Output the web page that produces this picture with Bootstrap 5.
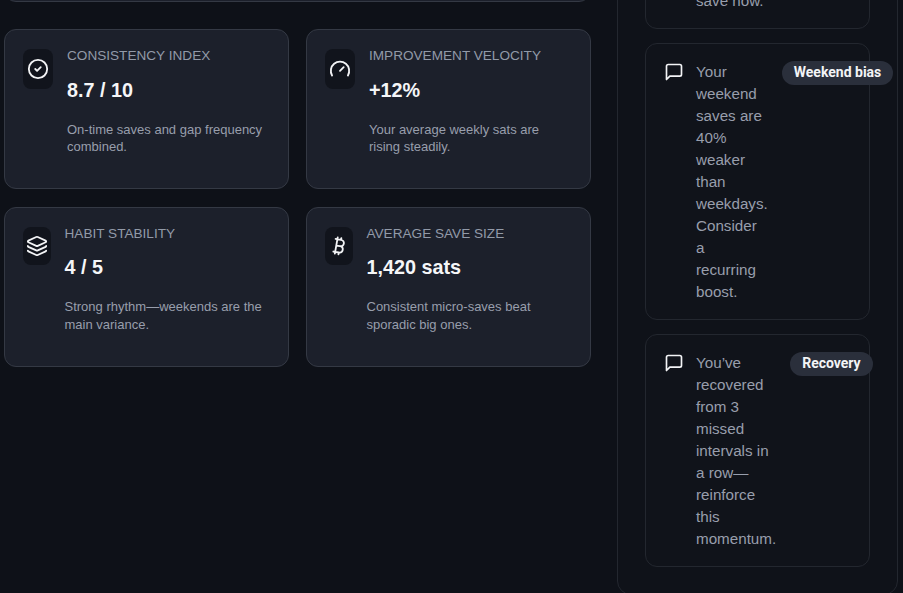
<!DOCTYPE html>
<html lang="en">
<head>
    <meta charset="UTF-8">
    <meta name="viewport" content="width=device-width, initial-scale=1.0">
    <title>Savings insights</title>
    <link href="https://cdn.jsdelivr.net/npm/bootstrap@5.3.0/dist/css/bootstrap.min.css" rel="stylesheet">
    <style>
        html, body { height: 100%; overflow: hidden; }
        body { background: #0e1118; font-family: "Liberation Sans", Arial, sans-serif; color: #f3f4f6; }
        /* page was scrolled down in the picture */
        .scroll-shift { margin-top: -58px; }
        .main-col { width: 587px; margin-left: 4px; margin-right: 26px; flex: none; }
        .stub-panel { height: 60px; background: #1c202b; border: 1px solid #343944; border-radius: 12px; margin-bottom: 27px; }
        .stat-row { --bs-gutter-x: 17px; --bs-gutter-y: 17.5px; }
        .stat-tile { height: 160px; background: #1c202b; border: 1px solid #343944; border-radius: 12px; padding: 18px 18px; gap: 14px; }
        .icon-tile { width: 30px; height: 40px; flex: none; background: #11141c; border-radius: 8px; color: #f3f4f6; margin-top: 1px; }
        .icon-tile.slim { width: 27.5px; height: 38px; }
        .icon-tile svg { width: 22px; height: 22px; }
        .stat-label { font-size: 13.6px; line-height: 16px; color: #929aa8; text-transform: uppercase; margin-bottom: 13.5px; }
        .stat-value { font-size: 19.8px; line-height: 24px; font-weight: 700; color: #f5f6f8; margin-bottom: 19px; }
        .stat-note { font-size: 13px; line-height: 17.5px; color: #989eac; margin: 0; }
        .side-panel { width: 281px; flex: none; border: 1px solid #23272f; border-radius: 14px; padding: 0 27px 27px; background: #0f1219; }
        .tip-tile { border: 1px solid #23272f; border-radius: 12px; padding: 17px 18px 16.5px; background: #10131a; margin-bottom: 13.5px; gap: 12px; }
        .tip-tile:last-child { margin-bottom: 0; }
        .tip-tile svg { width: 20px; height: 20px; flex: none; color: #f3f4f6; margin-top: 1px; }
        .tip-text { font-size: 15.2px; line-height: 22px; color: #989eac; margin: 0; }
        .tip-pill { flex: none; height: 24px; line-height: 23px; margin-left: 2px; padding: 0 12px; border-radius: 12px; background: #2a2f3b; color: #f3f4f6; font-family: Roboto, sans-serif; font-size: 14px; font-weight: 700; white-space: nowrap; }
        .stub-tip { height: 86px; overflow: hidden; display: flex; align-items: flex-end; padding: 0 0 16px 50px; }
    </style>
</head>
<body>

<svg width="0" height="0" class="d-block position-absolute">
    <symbol id="ic-check" viewBox="0 0 24 24"><circle cx="12" cy="12" r="10"/><path d="m9 12 2 2 4-4"/></symbol>
    <symbol id="ic-gauge" viewBox="0 0 24 24"><path d="m12 14 4-4"/><path d="M3.34 19a10 10 0 1 1 17.32 0"/></symbol>
    <symbol id="ic-layers" viewBox="0 0 24 24"><path d="M12.83 2.18a2 2 0 0 0-1.66 0L2.6 6.08a1 1 0 0 0 0 1.83l8.58 3.91a2 2 0 0 0 1.66 0l8.58-3.9a1 1 0 0 0 0-1.83Z"/><path d="M2 12a1 1 0 0 0 .58.91l8.6 3.91a2 2 0 0 0 1.65 0l8.58-3.9A1 1 0 0 0 22 12"/><path d="M2 17a1 1 0 0 0 .58.91l8.6 3.91a2 2 0 0 0 1.65 0l8.58-3.9A1 1 0 0 0 22 17"/></symbol>
    <symbol id="ic-btc" viewBox="0 0 24 24"><path d="M11.767 19.089c4.924.868 6.14-6.025 1.216-6.894m-1.216 6.894L5.86 18.047m5.908 1.042-.347 1.97m1.563-8.864c4.924.869 6.14-6.025 1.215-6.893m-1.215 6.893-3.94-.694m5.155-6.2L8.29 4.26m5.908 1.042.348-1.97M7.48 20.364l3.126-17.727"/></symbol>
    <symbol id="ic-msg" viewBox="0 0 24 24"><path d="M21 15a2 2 0 0 1-2 2H7l-4 4V5a2 2 0 0 1 2-2h14a2 2 0 0 1 2 2z"/></symbol>
</svg>

<div class="d-flex align-items-start scroll-shift">
    <div class="main-col">
        <div class="stub-panel"></div>
        <div class="row row-cols-2 stat-row">
            <div class="col">
                <div class="stat-tile d-flex">
                    <div class="icon-tile d-flex align-items-center justify-content-center"><svg fill="none" stroke="currentColor" stroke-width="2" stroke-linecap="round" stroke-linejoin="round"><use href="#ic-check"/></svg></div>
                    <div>
                        <div class="stat-label">Consistency index</div>
                        <div class="stat-value">8.7 / 10</div>
                        <p class="stat-note">On-time saves and gap frequency combined.</p>
                    </div>
                </div>
            </div>
            <div class="col">
                <div class="stat-tile d-flex">
                    <div class="icon-tile d-flex align-items-center justify-content-center"><svg fill="none" stroke="currentColor" stroke-width="2" stroke-linecap="round" stroke-linejoin="round"><use href="#ic-gauge"/></svg></div>
                    <div>
                        <div class="stat-label">Improvement velocity</div>
                        <div class="stat-value">+12%</div>
                        <p class="stat-note">Your average weekly sats are rising steadily.</p>
                    </div>
                </div>
            </div>
            <div class="col">
                <div class="stat-tile d-flex">
                    <div class="icon-tile slim d-flex align-items-center justify-content-center"><svg fill="none" stroke="currentColor" stroke-width="2" stroke-linecap="round" stroke-linejoin="round"><use href="#ic-layers"/></svg></div>
                    <div>
                        <div class="stat-label">Habit stability</div>
                        <div class="stat-value">4 / 5</div>
                        <p class="stat-note">Strong rhythm—weekends are the main variance.</p>
                    </div>
                </div>
            </div>
            <div class="col">
                <div class="stat-tile d-flex">
                    <div class="icon-tile slim d-flex align-items-center justify-content-center"><svg fill="none" stroke="currentColor" stroke-width="2" stroke-linecap="round" stroke-linejoin="round"><use href="#ic-btc"/></svg></div>
                    <div>
                        <div class="stat-label">Average save size</div>
                        <div class="stat-value">1,420 sats</div>
                        <p class="stat-note">Consistent micro-saves beat sporadic big ones.</p>
                    </div>
                </div>
            </div>
        </div>
    </div>

    <div class="side-panel">
        <div class="tip-tile stub-tip"><p class="tip-text">save now.</p></div>
        <div class="tip-tile d-flex">
            <svg fill="none" stroke="currentColor" stroke-width="2" stroke-linecap="round" stroke-linejoin="round"><use href="#ic-msg"/></svg>
            <p class="tip-text">Your weekend saves are 40% weaker than weekdays. Consider a recurring boost.</p>
            <span class="tip-pill">Weekend bias</span>
        </div>
        <div class="tip-tile d-flex">
            <svg fill="none" stroke="currentColor" stroke-width="2" stroke-linecap="round" stroke-linejoin="round"><use href="#ic-msg"/></svg>
            <p class="tip-text">You’ve recovered from 3 missed intervals in a row—reinforce this momentum.</p>
            <span class="tip-pill">Recovery</span>
        </div>
    </div>
</div>

<script src="https://cdn.jsdelivr.net/npm/bootstrap@5.3.0/dist/js/bootstrap.bundle.min.js"></script>
</body>
</html>
